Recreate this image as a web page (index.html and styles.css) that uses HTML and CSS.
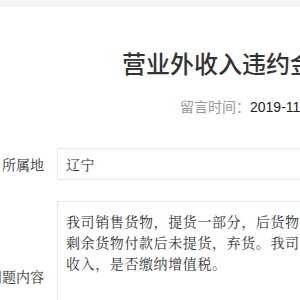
FILE: index.html
```html
<!DOCTYPE html>
<html lang="zh-CN">
<head>
    <meta charset="UTF-8">
    <meta name="viewport" content="width=device-width, initial-scale=1.0">
    <title>营业外收入违约金是否缴纳增值税</title>
    <link rel="stylesheet" href="styles.css">
</head>
<body>

    <div class="topbar"></div>

    <div class="page">
        <h1 class="title">营业外收入违约金是否缴纳增值税</h1>
        <p class="meta"><span class="meta-label">留言时间：</span>2019-11-20 09:32:15</p>

        <div class="form">
            <div class="row">
                <label class="row-label">所属地</label>
                <div class="field field-line">辽宁</div>
            </div>
            <div class="row">
                <label class="row-label">问题内容</label>
                <div class="field field-area">我司销售货物，提货一部分，后货物价格下跌，客户对剩余货物付款后未提货，弃货。我司将款项计入营业外收入，是否缴纳增值税。</div>
            </div>
        </div>
    </div>

</body>
</html>
```

FILE: styles.css
```css
body {
    margin: 0;
    font-family: "Noto Sans CJK SC", "Liberation Sans", sans-serif;
    color: #333;
    background-color: #fff;
    overflow: hidden;
}

.topbar {
    height: 7px;
    background-color: #f3f4f6;
}

.page {
    width: 760px;
}

.title {
    margin: 40px 0 0 122px;
    font-size: 24px;
    font-weight: 500;
    line-height: 32px;
    color: #333;
    white-space: nowrap;
}

.meta {
    margin: 17px 0 0 180px;
    font-family: "Liberation Sans", "Noto Sans CJK SC", sans-serif;
    font-size: 14px;
    line-height: 20px;
    color: #222;
    white-space: nowrap;
}

.meta-label {
    font-family: "Noto Sans CJK SC", sans-serif;
    color: #999;
}

.form {
    margin: 31px 0 0 -36px;
}

.row {
    display: flex;
    align-items: center;
    gap: 13px;
    margin-bottom: 21px;
}

.row-label {
    width: 80px;
    flex-shrink: 0;
    text-align: right;
    font-family: "Noto Serif CJK SC", "Noto Sans CJK SC", serif;
    font-size: 14px;
    color: #333;
}

.field {
    width: 356px;
    border: 1px solid #e6e6e6;
    font-family: "Noto Serif CJK SC", "Noto Sans CJK SC", serif;
    font-size: 14px;
    letter-spacing: 0.6px;
    color: #333;
}

.field-line {
    height: 30px;
    line-height: 30px;
    padding: 0 8px;
}

.field-area {
    height: 130px;
    padding: 9px 8px;
    line-height: 21px;
}
```
